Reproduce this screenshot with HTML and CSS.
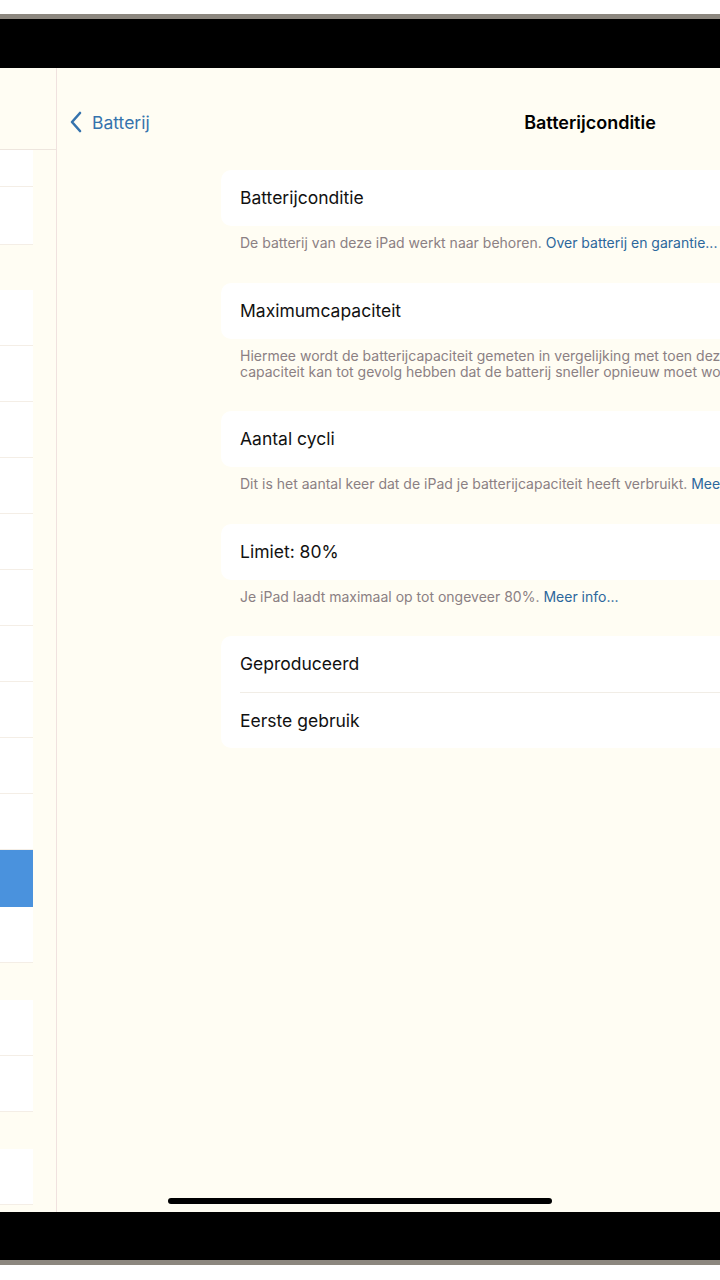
FILE: index.html
```html
<!DOCTYPE html>
<html lang="nl">
<head>
    <meta charset="UTF-8">
    <meta name="viewport" content="width=device-width, initial-scale=1.0">
    <title>Batterijconditie</title>
    <link rel="stylesheet" href="styles.css">
</head>
<body>

    <div class="bezel bezel-top"></div>

    <div class="screen">
        <aside class="sidebar">
            <div class="sidebar-head"></div>
            <div class="side-group first">
                <span class="side-row short"></span>
                <span class="side-row"></span>
            </div>
            <div class="side-group">
                <span class="side-row"></span>
                <span class="side-row"></span>
                <span class="side-row"></span>
                <span class="side-row"></span>
                <span class="side-row"></span>
                <span class="side-row"></span>
                <span class="side-row"></span>
                <span class="side-row"></span>
                <span class="side-row"></span>
                <span class="side-row"></span>
                <span class="side-row selected"></span>
                <span class="side-row"></span>
            </div>
            <div class="side-group">
                <span class="side-row"></span>
                <span class="side-row"></span>
            </div>
            <div class="side-group">
                <span class="side-row"></span>
            </div>
        </aside>

        <main class="detail">
            <header class="navbar">
                <a class="back" href="#">
                    <svg width="14" height="22" viewBox="0 0 14 22">
                        <path d="M11 2 L3 11 L11 20" fill="none" stroke="currentColor" stroke-width="2.6" stroke-linecap="round" stroke-linejoin="round"/>
                    </svg>
                    <span>Batterij</span>
                </a>
                <h1 class="title">Batterijconditie</h1>
                <span></span>
            </header>

            <section class="group">
                <div class="card">
                    <div class="row">Batterijconditie</div>
                </div>
                <p class="footer">De batterij van deze iPad werkt naar behoren. <a href="#">Over batterij en garantie...</a></p>
            </section>

            <section class="group">
                <div class="card">
                    <div class="row">Maximumcapaciteit</div>
                </div>
                <p class="footer">Hiermee wordt de batterijcapaciteit gemeten in vergelijking met toen deze nieuw was. Een lagere<br>capaciteit kan tot gevolg hebben dat de batterij sneller opnieuw moet worden opgeladen.</p>
            </section>

            <section class="group">
                <div class="card">
                    <div class="row">Aantal cycli</div>
                </div>
                <p class="footer">Dit is het aantal keer dat de iPad je batterijcapaciteit heeft verbruikt. <a href="#">Meer info...</a></p>
            </section>

            <section class="group">
                <div class="card">
                    <div class="row">Limiet: 80%</div>
                </div>
                <p class="footer">Je iPad laadt maximaal op tot ongeveer 80%. <a href="#">Meer info...</a></p>
            </section>

            <section class="group">
                <div class="card">
                    <div class="row">Geproduceerd</div>
                    <div class="row">Eerste gebruik</div>
                </div>
            </section>
        </main>

        <span class="home-indicator"></span>
    </div>

    <div class="bezel bezel-bottom"></div>

</body>
</html>
```

FILE: styles.css
```css
body {
    margin: 0;
    background: #ffffff;
    font-family: Inter, "Noto Sans", sans-serif;
    overflow: hidden;
}

.bezel {
    background: #000;
}

.bezel-top {
    height: 49px;
    margin-top: 14px;
    border-top: 5px solid #8c877f;
}

.bezel-bottom {
    height: 48px;
    margin-bottom: 15px;
    border-bottom: 5px solid #8c877f;
}

.screen {
    position: relative;
    display: flex;
    height: 1144px;
    background: #fffdf3;
    overflow: hidden;
}

/* sidebar, mostly cut off at the left edge */
.sidebar {
    flex: none;
    width: 56px;
    border-right: 1px solid #f0e2df;
}

.sidebar-head {
    height: 81px;
    border-bottom: 1px solid #eee6de;
}

.side-group {
    display: flex;
    flex-direction: column;
    width: 33px;
    margin-bottom: 37px;
}

.side-group.first {
    margin-bottom: 45px;
}

.side-row {
    display: block;
    height: 55px;
    background: #ffffff;
    border-bottom: 1px solid #f4eee6;
}

.side-row.short {
    height: 36px;
}

.side-group.first .side-row + .side-row {
    height: 57px;
}

.side-row.selected {
    height: 56px;
    background: #4a92dd;
    border-bottom-color: #4a92dd;
}

/* detail pane */
.detail {
    flex: none;
    width: 1066px;
}

.navbar {
    display: grid;
    grid-template-columns: 1fr auto 1fr;
    align-items: center;
    height: 22px;
    padding: 43px 0 37px;
}

.back {
    display: flex;
    align-items: center;
    gap: 9px;
    padding-left: 12px;
    color: #3573ad;
    text-decoration: none;
    font-size: 17.5px;
}

.title {
    margin: 0;
    font-size: 18px;
    font-weight: 600;
    color: #000;
}

.group {
    margin: 0 164px 31.5px;
}

.card {
    background: #ffffff;
    border-radius: 10px;
}

.row {
    height: 56px;
    line-height: 56px;
    margin-left: 19px;
    font-size: 17.5px;
    color: #111;
}

.row + .row {
    border-top: 1px solid #f1ede6;
    height: 55px;
    line-height: 55px;
}

.footer {
    margin: 0;
    padding: 9px 19px 0;
    font-size: 14px;
    line-height: 16px;
    color: #8b8083;
    white-space: nowrap;
}

.footer a {
    color: #2c679c;
    text-decoration: none;
}

.home-indicator {
    position: absolute;
    left: 168px;
    bottom: 8px;
    width: 384px;
    height: 6px;
    border-radius: 3px;
    background: #000;
}
```
